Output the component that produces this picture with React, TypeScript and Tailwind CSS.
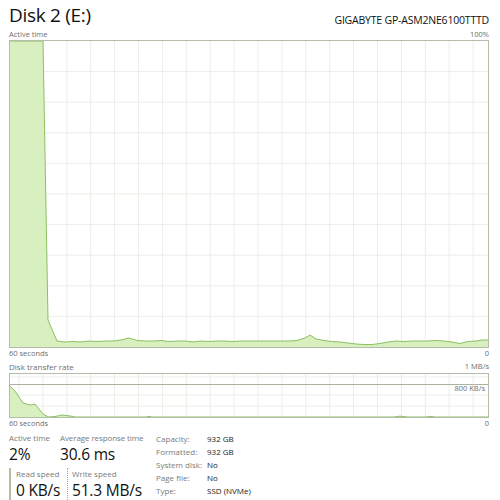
const mainPts: [number, number][] = [
  [47, 300], [55, 301], [63, 300.5], [71, 301], [79, 300], [87, 300.5], [95, 300], [103, 300],
  [111, 299], [119, 297], [127, 299.5], [135, 300], [143, 300], [151, 299.5], [159, 300.5],
  [167, 300], [175, 300], [183, 301], [191, 300], [199, 300.5], [207, 300], [215, 300],
  [223, 300.5], [231, 300], [239, 300], [247, 300], [255, 300], [263, 300], [271, 300],
  [279, 300], [287, 299.5], [295, 297], [300, 294], [306, 298], [314, 299.5], [322, 300.5],
  [330, 301], [338, 302], [346, 303], [354, 303.5], [362, 303.5], [370, 302.5], [378, 301],
  [386, 300], [394, 300.5], [402, 300], [410, 300], [418, 300], [426, 299.5], [434, 300],
  [442, 301], [450, 302.5], [458, 300.5], [466, 300], [472, 299], [478, 299],
];

const smallPts: [number, number][] = [
  [0, 12], [5, 17], [13, 29], [20, 31], [25, 30], [33, 40], [38, 43], [45, 42.5], [52, 41],
  [60, 42], [65, 43], [136, 43], [139, 42.4], [142, 43], [384, 43], [390, 42.2], [398, 43],
  [416, 43], [420, 42.3], [425, 43], [478, 43],
];

function toPath(pts: [number, number][]) {
  return pts.map(([x, y]) => `${x},${y}`).join(" L");
}

function Grid({ w, h, rows }: { w: number; h: number; rows: number[] }) {
  const cols: number[] = [];
  for (let x = 9; x < w; x += 23.9) cols.push(x);
  return (
    <g stroke="#ebefe7" strokeWidth="1">
      {cols.map((x) => (
        <line key={"c" + x} x1={x} y1={0} x2={x} y2={h} />
      ))}
      {rows.map((y) => (
        <line key={"r" + y} x1={0} y1={y} x2={w} y2={y} />
      ))}
    </g>
  );
}

function MainChart() {
  const rows = Array.from({ length: 9 }, (_, i) => (i + 1) * 30.6);
  const line = "0,0 L33,0 L38,279 L" + toPath(mainPts);
  return (
    <div className="h-[308px] border border-[#b4bcab]">
      <svg viewBox="0 0 478 306" preserveAspectRatio="none" className="block w-full h-full">
        <Grid w={478} h={306} rows={rows} />
        <path d={`M0,306 L${line} L478,306 Z`} fill="#d8efbf" />
        <path d={`M${line}`} fill="none" stroke="#8dbf63" strokeWidth="1" />
      </svg>
    </div>
  );
}

function TransferChart() {
  const line = toPath(smallPts);
  return (
    <div className="relative h-[45px] border border-[#b4bcab]">
      <svg viewBox="0 0 478 43" preserveAspectRatio="none" className="block w-full h-full">
        <Grid w={478} h={43} rows={[3, 21, 32]} />
        <line x1={0} y1={10.5} x2={478} y2={10.5} stroke="#a9b39f" strokeWidth="1" />
        <path d={`M0,43 L${line} L478,43 Z`} fill="#d8efbf" />
        <path d={`M${line}`} fill="none" stroke="#8dbf63" strokeWidth="1" />
      </svg>
      <span className="absolute right-[3px] top-[11px] text-[7.5px] leading-none text-[#6e6e6e]">
        800 KB/s
      </span>
    </div>
  );
}

function Info({ label, value }: { label: string; value: string }) {
  return (
    <div className="flex h-[13px] items-center">
      <span className="w-[51px] text-[#7a7a7a]">{label}</span>
      <span className="text-[#1a1a1a]">{value}</span>
    </div>
  );
}

export default function App() {
  return (
    <div
      className="w-[500px] h-[500px] bg-white px-[9px] pr-[11px] flex flex-col overflow-hidden"
      style={{ fontFamily: '"Open Sans", "Noto Sans", sans-serif' }}
    >
      <div className="flex items-end justify-between h-[29px]">
        <span className="text-[19px] leading-none text-[#111] tracking-[-0.3px] pb-[4px]">Disk 2 (E:)</span>
        <span className="text-[10.5px] leading-none text-[#111] pb-[4px] tracking-[-0.2px]">
          GIGABYTE GP-ASM2NE6100TTTD
        </span>
      </div>
      <div className="flex justify-between items-center h-[11px] text-[7.5px] text-[#6e6e6e]">
        <span>Active time</span>
        <span>100%</span>
      </div>
      <MainChart />
      <div className="flex justify-between items-center h-[12px] text-[7.5px] text-[#6e6e6e]">
        <span>60 seconds</span>
        <span>0</span>
      </div>
      <div className="flex justify-between items-center h-[13px] text-[8px] text-[#6e6e6e]">
        <span>Disk transfer rate</span>
        <span className="text-[7.5px]">1 MB/s</span>
      </div>
      <TransferChart />
      <div className="flex justify-between items-center h-[12px] text-[7.5px] text-[#6e6e6e]">
        <span>60 seconds</span>
        <span>0</span>
      </div>
      <div className="flex mt-[2px]">
        <div className="flex flex-col w-[147px]">
          <div className="flex h-[34px]">
            <div className="flex flex-col w-[51px]">
              <span className="text-[8px] leading-[12px] text-[#7a7a7a]">Active time</span>
              <span className="text-[15.5px] leading-[20px] text-[#111] tracking-[-0.2px]">2%</span>
            </div>
            <div className="flex flex-col">
              <span className="text-[8px] leading-[12px] text-[#7a7a7a] tracking-[-0.1px]">Average response time</span>
              <span className="text-[15.5px] leading-[20px] text-[#111] tracking-[-0.2px]">30.6 ms</span>
            </div>
          </div>
          <div className="flex mt-[2px]">
            <div className="flex flex-col w-[58px] border-l-2 border-[#b4bf9f] pl-[5px]">
              <span className="text-[8px] leading-[12px] text-[#7a7a7a]">Read speed</span>
              <span className="text-[15.5px] leading-[20px] text-[#111] tracking-[-0.2px]">0 KB/s</span>
            </div>
            <div className="flex flex-col border-l border-dotted border-[#8dbf63] pl-[4px]">
              <span className="text-[8px] leading-[12px] text-[#7a7a7a]">Write speed</span>
              <span className="text-[15.5px] leading-[20px] text-[#111] tracking-[-0.2px]">51.3 MB/s</span>
            </div>
          </div>
        </div>
        <div className="flex flex-col text-[8px]">
          <Info label="Capacity:" value="932 GB" />
          <Info label="Formatted:" value="932 GB" />
          <Info label="System disk:" value="No" />
          <Info label="Page file:" value="No" />
          <Info label="Type:" value="SSD (NVMe)" />
        </div>
      </div>
    </div>
  );
}
